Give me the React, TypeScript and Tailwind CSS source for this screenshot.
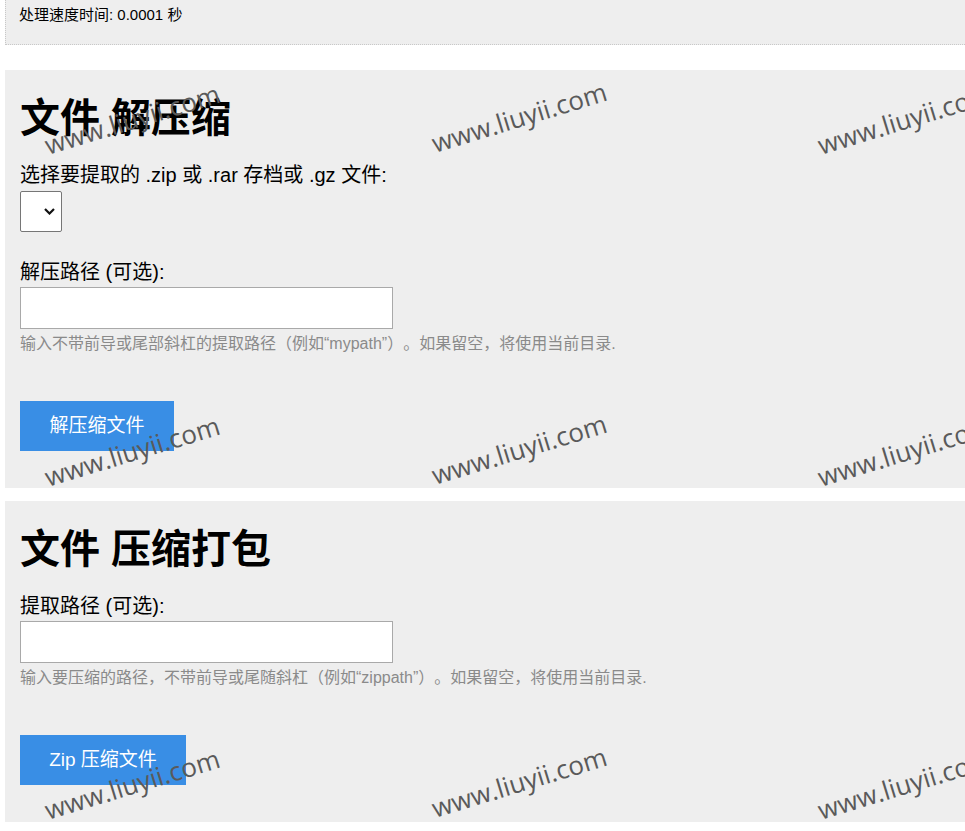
import React from 'react';

const font = "font-['Liberation_Sans','Noto_Sans_CJK_SC',sans-serif]";

// watermark centres, three columns by three rows
const marks = [
  { x: 132, y: 119 },
  { x: 519, y: 117 },
  { x: 905, y: 119 },
  { x: 132, y: 451 },
  { x: 519, y: 449 },
  { x: 905, y: 451 },
  { x: 132, y: 784 },
  { x: 519, y: 782 },
  { x: 905, y: 784 },
];

const Chevron: React.FC = () => (
  <svg width="11" height="7" viewBox="0 0 11 7" fill="none">
    <path d="M1 1l4.5 4.5L10 1" stroke="#111" strokeWidth="2.2" />
  </svg>
);

const App: React.FC = () => {
  return (
    <div
      className={`relative min-h-[831px] overflow-hidden bg-white pl-[5px] text-black [text-spacing-trim:space-all] ${font}`}
    >
      {/* Temps de traitement */}
      <div className="h-[45px] border-b border-l border-dotted border-[#c8c8c8] bg-[#eee] pl-[13px] pt-[5px] text-[15px] leading-[20px]">
        处理速度时间: 0.0001 秒
      </div>

      {/* Décompression */}
      <section className="mt-[25px] bg-[#eee] px-[15px] pb-[37px] pt-6">
        <h2 className="text-[40px] font-bold leading-[48px]">文件 解压缩</h2>
        <label className="mt-[21px] block text-[20px] leading-[24px]">
          选择要提取的 .zip 或 .rar 存档或 .gz 文件:
        </label>
        <div className="mt-1 flex h-[41px] w-[42px] items-center justify-end rounded-[2px] border border-[#767676] bg-white pr-[6px]">
          <Chevron />
        </div>
        <label className="mt-[28px] block text-[20px] leading-[24px]">解压路径 (可选):</label>
        <div className="mt-[3px] h-[42px] w-[373px] border border-[#a9a9a9] bg-white" />
        <p className="mt-[5px] text-[16px] leading-[20px] text-[#8a8a8a]">
          输入不带前导或尾部斜杠的提取路径（例如“mypath”）。如果留空，将使用当前目录.
        </p>
        <button className="mt-[47px] h-[50px] w-[154px] bg-[#398ee5] text-[19px] text-white">
          解压缩文件
        </button>
      </section>

      {/* Compression */}
      <section className="mt-[13px] bg-[#eee] px-[15px] pb-[37px] pt-6">
        <h2 className="text-[40px] font-bold leading-[48px]">文件 压缩打包</h2>
        <label className="mt-[21px] block text-[20px] leading-[24px]">提取路径 (可选):</label>
        <div className="mt-[3px] h-[42px] w-[373px] border border-[#a9a9a9] bg-white" />
        <p className="mt-[5px] text-[16px] leading-[20px] text-[#8a8a8a]">
          输入要压缩的路径，不带前导或尾随斜杠（例如“zippath”）。如果留空，将使用当前目录.
        </p>
        <button className="mt-[47px] h-[50px] w-[166px] bg-[#398ee5] text-[19px] text-white">
          Zip 压缩文件
        </button>
      </section>

      {/* Filigrane */}
      {marks.map((m, i) => (
        <span
          key={i}
          className="pointer-events-none absolute -translate-x-1/2 -translate-y-1/2 -rotate-[17deg] whitespace-nowrap font-['Open_Sans',sans-serif] text-[26px] leading-none text-[#5a5a5a]"
          style={{ left: m.x, top: m.y }}
        >
          www.liuyii.com
        </span>
      ))}
    </div>
  );
};

export default App;
